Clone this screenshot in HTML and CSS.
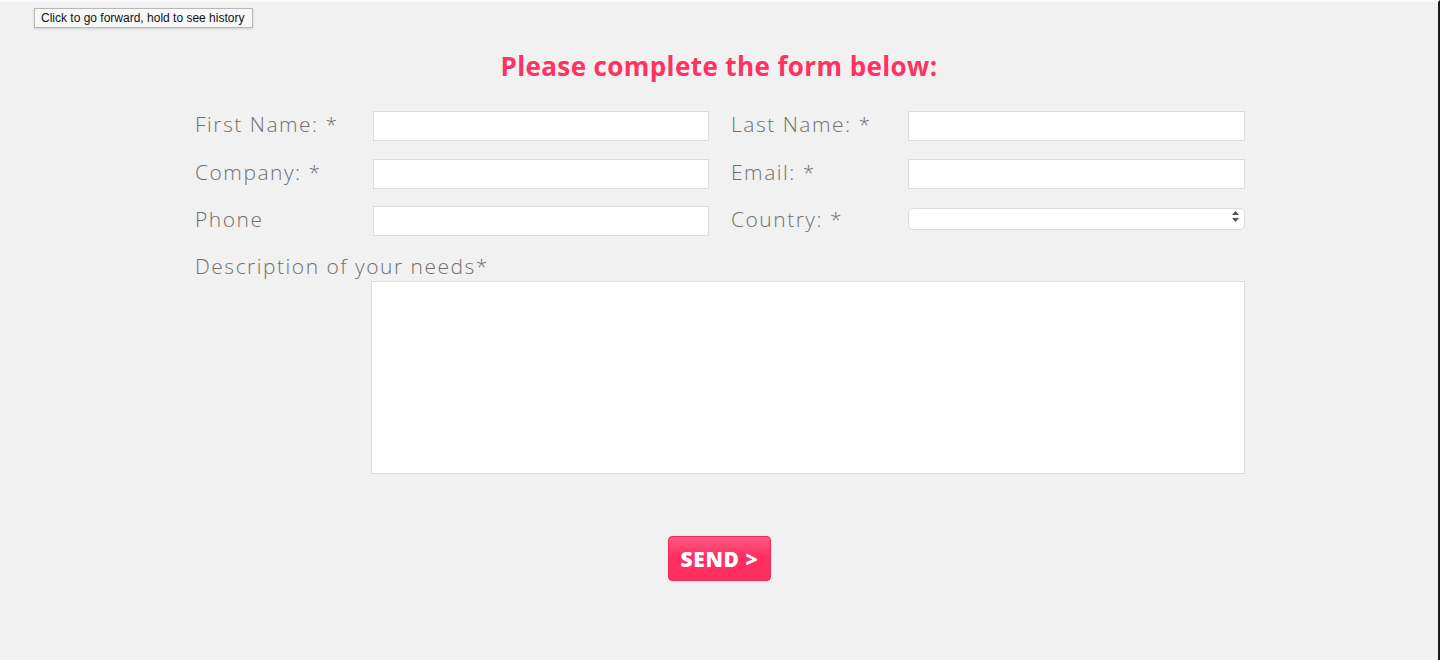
FILE: index.html
```html
<!DOCTYPE html>
<html lang="en">
<head>
    <meta charset="UTF-8">
    <meta name="viewport" content="width=device-width, initial-scale=1.0">
    <title>Contact</title>
    <link rel="stylesheet" href="styles.css">
</head>
<body>

    <div class="page">
        <div class="tooltip">Click to go forward, hold to see history</div>

        <h1 class="title">Please complete the form below:</h1>

        <form id="contactForm" class="contact">
            <div class="grid">
                <label for="first">First Name: *</label>
                <input type="text" id="first" name="first">
                <span class="spacer"></span>
                <label for="last">Last Name: *</label>
                <input type="text" id="last" name="last">

                <label for="company">Company: *</label>
                <input type="text" id="company" name="company">
                <span class="spacer"></span>
                <label for="email">Email: *</label>
                <input type="text" id="email" name="email">

                <label for="phone">Phone</label>
                <input type="text" id="phone" name="phone">
                <span class="spacer"></span>
                <label for="country">Country: *</label>
                <div class="select-wrap">
                    <select id="country" name="country">
                        <option value=""></option>
                    </select>
                    <svg class="arrows" width="7" height="11" viewBox="0 0 7 11">
                        <path d="M3.5 0 L7 4 L0 4 Z" fill="#555"/>
                        <path d="M0 7 L7 7 L3.5 11 Z" fill="#555"/>
                    </svg>
                </div>
            </div>

            <label for="needs" class="needs-label">Description of your needs*</label>
            <textarea id="needs" name="needs"></textarea>

            <div class="actions">
                <button type="submit">SEND &gt;</button>
            </div>
        </form>
    </div>

</body>
</html>
```

FILE: styles.css
```css
body {
    margin: 0;
    background-color: #f1f1f1;
    font-family: "Open Sans", Arial, sans-serif;
}

.page {
    position: relative;
    height: 658px;
    border-top: 2px solid #fafafa;
    border-right: 2px solid #1a1a1a;
    background-color: #f1f1f1;
}

.tooltip {
    position: absolute;
    left: 34px;
    top: 6px;
    width: 211px;
    height: 18px;
    padding-left: 6px;
    border: 1px solid #b9b9b9;
    background-color: #f7f7f7;
    box-shadow: 0 1px 2px rgba(0, 0, 0, 0.15);
    font-family: "Liberation Sans", Arial, sans-serif;
    font-size: 12px;
    line-height: 18px;
    color: #111;
    white-space: nowrap;
}

.title {
    margin: 0;
    padding-top: 49px;
    text-align: center;
    color: #fe3263;
    font-size: 26px;
    font-weight: 700;
    line-height: 30px;
    letter-spacing: 0.4px;
}

.contact {
    width: 1050px;
    margin: 30px 0 0 195px;
}

.grid {
    display: grid;
    grid-template-columns: 178px 336px 22px 177px 337px;
    grid-auto-rows: 30px;
    row-gap: 17.5px;
    align-items: center;
}

label {
    color: #707070;
    font-size: 21px;
    font-weight: 300;
    letter-spacing: 1.5px;
    margin-top: -4px;
}

input {
    box-sizing: border-box;
    height: 30px;
    width: 100%;
    border: 1px solid #dcdcdc;
    background-color: white;
    margin: 0;
}

.select-wrap {
    position: relative;
    align-self: start;
}

select {
    box-sizing: border-box;
    width: 100%;
    height: 22px;
    border: 1px solid #dcdcdc;
    border-radius: 5px;
    background-color: white;
    appearance: none;
    -webkit-appearance: none;
    margin: 0;
}

.arrows {
    position: absolute;
    right: 6px;
    top: 5px;
}

.needs-label {
    display: block;
    margin-top: 16px;
    line-height: 28px;
}

textarea {
    display: block;
    box-sizing: border-box;
    width: 874px;
    height: 193px;
    margin: 1px 0 0 176px;
    border: 1px solid #dcdcdc;
    background-color: white;
    resize: none;
}

.actions {
    margin-top: 62px;
    padding-left: 473px;
}

button {
    width: 103px;
    height: 45px;
    border: 1px solid #f0275a;
    border-radius: 4px;
    background: linear-gradient(#ff5b82, #ff2f60 45%, #ff2f60);
    color: white;
    font-family: "Open Sans", Arial, sans-serif;
    font-size: 21px;
    font-weight: 800;
    letter-spacing: 0.6px;
    cursor: pointer;
}
```
